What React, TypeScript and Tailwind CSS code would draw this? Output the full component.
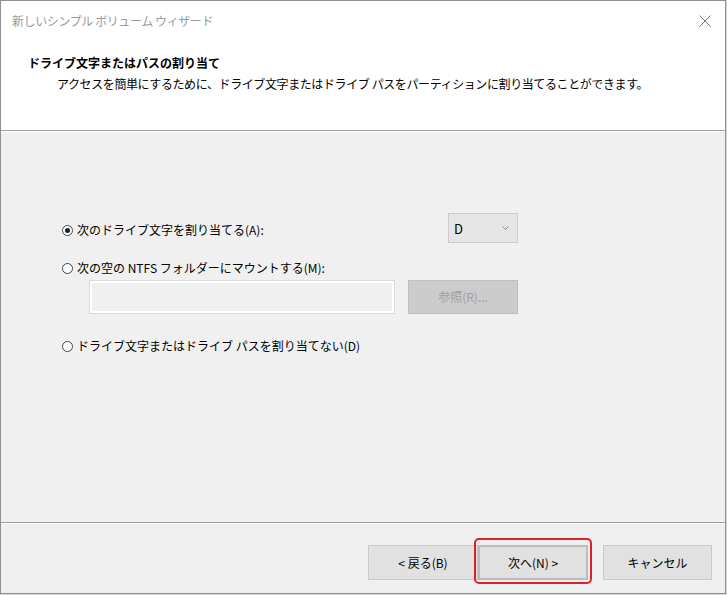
import React from "react";

function Radio({ checked }: { checked?: boolean }) {
  return (
    <span className="flex h-[11px] w-[11px] shrink-0 items-center justify-center rounded-full border border-[#444444] bg-white">
      {checked && <span className="h-[5px] w-[5px] rounded-full bg-[#222222]" />}
    </span>
  );
}

export default function App() {
  return (
    <div className="h-[595px] w-[727px] overflow-hidden bg-[#d9d9d9] font-['Noto_Sans_CJK_JP',sans-serif]">
      <div className="flex h-[594px] w-[726px] flex-col border border-[#8f8f8f] bg-[#f0f0f0]">
        {/* white top area */}
        <div className="flex flex-col bg-white">
          <div className="flex h-[39px] items-center justify-between pl-[11px] pr-[13px]">
            <span className="text-[12px] leading-[16px] tracking-[-0.4px] text-[#9a9a9a]">新しいシンプル ボリューム ウィザード</span>
            <svg width="12" height="12" viewBox="0 0 12 12" className="mr-[1px]">
              <path d="M0.5 0.5 L11.5 11.5 M11.5 0.5 L0.5 11.5" stroke="#707070" strokeWidth="1" fill="none" />
            </svg>
          </div>
          <div className="flex flex-col pb-[38px] pl-[27px] pt-[15px]">
            <span className="text-[12px] font-bold leading-[16px] text-black">ドライブ文字またはパスの割り当て</span>
            <span className="mt-[5px] pl-[29px] text-[12px] leading-[16px] tracking-[-0.4px] text-black">
              アクセスを簡単にするために、ドライブ文字またはドライブ パスをパーティションに割り当てることができます。
            </span>
          </div>
        </div>
        <div className="h-px bg-[#a0a0a0]" />
        <div className="h-px bg-white" />

        {/* content */}
        <div className="flex h-[390px] flex-col pl-[61px] pt-[81px]">
          <div className="flex w-[456px] items-start justify-between">
            <label className="mt-[7px] flex h-[20px] items-center gap-[4px] text-[12px] text-black">
              <Radio checked />
              <span>次のドライブ文字を割り当てる(A):</span>
            </label>
            <div className="flex h-[30px] w-[70px] items-center justify-between border border-[#cccccc] bg-[#e5e5e5] pl-[5px] pr-[8px]">
              <span className="text-[13px] leading-none text-black">D</span>
              <svg width="7" height="4" viewBox="0 0 7 4">
                <path d="M0.5 0.5 L3.5 3.5 L6.5 0.5" stroke="#888888" strokeWidth="1" fill="none" />
              </svg>
            </div>
          </div>
          <label className="mt-[15px] flex h-[20px] items-center gap-[4px] text-[12px] text-black">
            <Radio />
            <span>次の空の NTFS フォルダーにマウントする(M):</span>
          </label>
          <div className="mt-[2px] flex w-[456px] items-center justify-between pl-[27px]">
            <div className="h-[34px] w-[306px] border border-[#dadada] bg-[#f0f0f0] shadow-[inset_0_0_0_2px_#ffffff]" />
            <div className="flex h-[34px] w-[110px] items-center justify-center border border-[#bfbfbf] bg-[#cccccc] text-[12px] text-[#a0a0a0]">
              参照(R)...
            </div>
          </div>
          <label className="mt-[22px] flex h-[20px] items-center gap-[4px] text-[12px] text-black">
            <Radio />
            <span>ドライブ文字またはドライブ パスを割り当てない(D)</span>
          </label>
        </div>

        <div className="h-px bg-[#a0a0a0]" />
        <div className="h-px bg-white" />

        {/* footer */}
        <div className="flex flex-1 items-start justify-end pr-[13px] pt-[21px]">
          <div className="flex h-[35px] w-[110px] items-center justify-center border border-[#c9c9c9] bg-[#e1e1e1] text-[12px] text-black">
            &lt; 戻る(B)
          </div>
          <div className="relative">
            <div className="flex h-[35px] w-[110px] items-center justify-center border-2 border-[#bdbdbd] bg-[#e1e1e1] text-[12px] text-black">
              次へ(N) &gt;
            </div>
            <div className="pointer-events-none absolute bottom-[-4px] left-[-4px] right-[-4px] top-[-7px] rounded-[5px] border-2 border-[#e3202a]" />
          </div>
          <div className="ml-[15px] flex h-[35px] w-[109px] items-center justify-center border border-[#c9c9c9] bg-[#e1e1e1] text-[12px] text-black">
            キャンセル
          </div>
        </div>
      </div>
    </div>
  );
}
